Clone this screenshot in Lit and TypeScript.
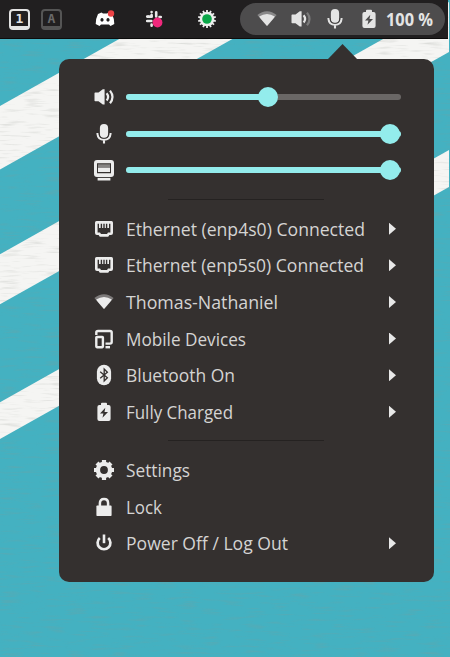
import { LitElement, html, css, svg, nothing } from "lit";
import { customElement, property } from "lit/decorators.js";

const wifi = svg`<path d="M10 2.200Q4.800 2.200 .4 6L10 17 19.600 6Q15.200 2.200 10 2.200Z" opacity=".4"/><path d="M10 4.900Q6 4.900 2.200 7.600Q2.600 8.800 10 17 17.400 8.800 17.800 7.600 14 4.900 10 4.900Z"/>`;
const speaker = (dim: number) => svg`<path d="M.5 6.200Q.5 5.500 1.200 5.500H4.500L8.800 2.200H10.600V17.400H8.800L4.500 14.200H1.200Q.5 14.200 .5 13.500Z"/><path d="M12.600 6.300Q15.600 10 12.600 13.500" fill="none" stroke="currentColor" stroke-width="2.200"/><path d="M16 3.600Q21 10 16 16.200" fill="none" stroke="currentColor" stroke-width="2.200" opacity=${dim}/>`;
const battery = svg`<path fill-rule="evenodd" d="M8 .8h4a1 1 0 0 1 1 1V3h1.600A2 2 0 0 1 16.600 5V17a2 2 0 0 1-2 2H5.400a2 2 0 0 1-2-2V5a2 2 0 0 1 2-2H7V1.800a1 1 0 0 1 1-1ZM11.300 5.800 6 11.600H9.400L8.500 15.800 14 9.900H10.500Z"/>`;
const ethernet = svg`<path fill-rule="evenodd" d="M2.800 2H17.200A1.700 1.700 0 0 1 19 3.800V14A2 2 0 0 1 17 16H15.400L14.200 17.800H5.800L4.600 16H3A2 2 0 0 1 1 14V3.800A1.700 1.700 0 0 1 2.800 2ZM3.600 4.700V13.400H6L7 15H13L14 13.400H16.400V4.700H15V9H13.300V4.700H11.900V9H10.700V4.700H9.300V9H8.100V4.700H6.700V9H5V4.700Z"/>`;

const icons: Record<string, unknown> = {
  wifi,
  battery,
  ethernet,
  speaker: speaker(1),
  speakerDim: speaker(0.3),
  mic: svg`<rect x="5.900" y="0" width="8.200" height="14" rx="4.100"/><path d="M3.500 9V10Q4 15.800 10 15.800T16.500 10V9M10 15.500V19.600" fill="none" stroke="currentColor" stroke-width="2.100"/><path d="M5.200 9V10Q5.600 14.300 10 14.300T14.800 10V9" fill="none" stroke="#34302f" stroke-width=".7"/>`,
  display: svg`<path fill-rule="evenodd" d="M3 0H17A3 3 0 0 1 20 3V14A3 3 0 0 1 17 17H3A3 3 0 0 1 0 14V3A3 3 0 0 1 3 0ZM3 3.300V13.200H17V3.300Z"/><rect x="4" y="4.300" width="12" height="3.500" opacity=".45"/><rect x="4" y="7.800" width="12" height="4.200"/><rect x="3.600" y="17.900" width="12.800" height="2.600"/>`,
  devices: svg`<g fill="none" stroke="currentColor" stroke-width="2.400"><path d="M2.300 6V3.600Q2.300 2 4 2H16Q17.700 2 17.700 3.600V13Q17.700 14.600 16 14.600H11.500"/><rect x="2.300" y="8" width="6.600" height="10.200" rx=".6"/></g><path d="M11.500 17H16V19.400H11.500Z"/>`,
  bluetooth: svg`<rect x="2.900" y="-.3" width="14.200" height="20.600" rx="7.100"/><path d="M6.200 6.700 13.400 12.800 10.200 16V4L13.400 7.200 6.200 13.300" fill="none" stroke="#34302f" stroke-width="1.300"/>`,
  gear: svg`<circle cx="10" cy="10" r="6.100" fill="none" stroke="currentColor" stroke-width="4.400"/><g stroke="currentColor" stroke-width="4.200"><path d="M10 0V3.600M10 16.400V20M0 10H3.600M16.400 10H20M3 3 5 5M15 15 17 17M3 17 5 15M15 5 17 3"/></g>`,
  lock: svg`<rect x="2.400" y="8.600" width="15.200" height="10.400" rx=".8"/><path d="M5.900 9.500V6.200Q5.900 2 10 2T14.100 6.200V9.500" fill="none" stroke="currentColor" stroke-width="2.500"/>`,
  power: svg`<path d="M5.800 5A6.400 6.400 0 1 0 14.200 5" fill="none" stroke="currentColor" stroke-width="2.700"/><path d="M8.700 1.500H11.300V10.200H8.700Z"/>`,
};

@customElement("sym-icon")
class SymIcon extends LitElement {
  @property() name = "";
  static styles = css`
    :host { display: block; width: 20px; height: 20px; flex: none; }
    svg { display: block; width: 100%; height: 100%; fill: currentColor; overflow: visible; }
  `;
  render() {
    return html`<svg viewBox="0 0 20 20">${icons[this.name]}</svg>`;
  }
}

@customElement("fit-text")
class FitText extends LitElement {
  @property() text = "";
  @property({ type: Number }) length = 100;
  static styles = css`
    :host { display: block; font: 18.4px "Open Sans", "Noto Sans", sans-serif; }
    svg { display: block; height: 26px; fill: currentColor; overflow: visible; }
  `;
  render() {
    return html`<svg width=${this.length}><text x="0" y="19.500" textLength=${this.length} lengthAdjust="spacingAndGlyphs">${this.text}</text></svg>`;
  }
}

const network = [
  ["ethernet", "Ethernet (enp4s0) Connected", 239],
  ["ethernet", "Ethernet (enp5s0) Connected", 238],
  ["wifi", "Thomas-Nathaniel", 152],
  ["devices", "Mobile Devices", 120],
  ["bluetooth", "Bluetooth On", 109],
  ["battery", "Fully Charged", 107],
] as const;
const session = [
  ["gear", "Settings", 64],
  ["lock", "Lock", 36],
  ["power", "Power Off / Log Out", 162],
] as const;
const sliders = [
  ["speaker", 142.5],
  ["mic", 264],
  ["display", 264],
] as const;

@customElement("app-root")
class AppRoot extends LitElement {
  static styles = css`
    :host { display: block; position: relative; width: 450px; height: 657px; overflow: hidden; background: #44b1c1; color: #ececec; }
    .wall { position: absolute; inset: 0; width: 450px; height: 657px; }
    .bar { position: relative; box-sizing: border-box; width: 448px; height: 39px; display: flex; align-items: center; padding: 0 3px 0 9px; background: #211f20; border-bottom: 1px solid #0d0c0c; }
    .key { box-sizing: border-box; width: 21px; height: 21px; border: 2.5px solid #e4e4e4; border-bottom-width: 4px; border-radius: 4px; color: #e4e4e4; font: bold 13px/15px "DejaVu Sans Mono", monospace; text-align: center; margin-right: 11px; }
    .key.dim { border-color: #555; color: #6a6a6a; margin-right: 33px; }
    .app { width: 20px; height: 20px; overflow: visible; }
    .slack { margin-left: 29px; }
    .green { margin-left: 33px; }
    .pill { box-sizing: border-box; margin-left: auto; width: 205px; height: 32px; border-radius: 16px; background: #4d4c4d; display: flex; align-items: center; padding: 0 12px 0 17px; color: #e4e4e4; }
    .pill sym-icon + sym-icon { margin-left: 14px; }
    .pct { margin-left: auto; font-weight: 700; font-size: 17px; }
    .panel { position: relative; box-sizing: border-box; margin: 20px 0 0 59px; width: 375px; height: 523px; padding: 20px 33px 0 34.5px; border-radius: 10px; background: #34302f; }
    .panel::before { content: ""; position: absolute; left: 268px; top: -15px; width: 31px; height: 16px; background: #34302f; clip-path: polygon(50% 0, 100% 100%, 0 100%); }
    .row { height: 36.6px; display: flex; align-items: center; }
    .row fit-text { margin-left: 12px; color: #d4d4d3; }
    .arrow { margin-left: auto; margin-right: 5px; width: 7px; height: 12px; background: #e8e8e8; clip-path: polygon(0 0, 100% 50%, 0 100%); }
    .track { position: relative; margin-left: 12px; width: 275px; height: 6px; border-radius: 3px; background: #6a6766; }
    .fill { height: 6px; border-radius: 3px; background: #93ecec; }
    .knob { position: absolute; top: -7px; width: 20px; height: 20px; margin-left: -10px; border-radius: 50%; background: #93ecec; }
    .sep { height: 21.7px; display: flex; align-items: center; justify-content: center; }
    .sep::before { content: ""; width: 156px; height: 1px; background: #252221; margin-right: 2px; }
  `;

  private row([icon, text, length]: readonly [string, string, number], arrow = true) {
    return html`<div class="row"><sym-icon name=${icon}></sym-icon><fit-text .text=${text} .length=${length}></fit-text>${arrow ? html`<span class="arrow"></span>` : nothing}</div>`;
  }

  render() {
    const teeth = Array.from({ length: 14 }, (_, i) => svg`<rect x="9.100" y="1" width="1.800" height="4" transform="rotate(${(i * 360) / 14} 10 10)"/>`);
    return html`
      <svg class="wall" viewBox="0 0 450 657">
        <filter id="weave" x="0" y="0" width="100%" height="100%">
          <feTurbulence type="fractalNoise" baseFrequency=".045 .42" numOctaves="2" seed="4"/>
          <feColorMatrix values="0 0 0 0 .28  0 0 0 0 .3  0 0 0 0 .27  1.600 0 0 0 -.84"/>
        </filter>
        <g fill="#f5f5f3">
          <path d="M0 106 449-146.300V-82.800L0 169.500Z"/>
          <path d="M0 254.300 449 2V52L0 304.300Z"/>
          <path d="M0 402.300 449 150V187L0 439Z"/>
        </g>
        <rect width="450" height="657" filter="url(#weave)" opacity=".4"/>
      </svg>
      <div class="bar">
        <span class="key">1</span><span class="key dim">A</span>
        <svg class="app" viewBox="0 0 20 20"><path fill="#fff" fill-rule="evenodd" d="M6.500 3.500 8 4.500H12L13.500 3.500 17 5Q19.500 10 19.300 15L15.500 17 14 15.500H6L4.500 17 .7 15Q.5 10 3 5ZM7 9a1.600 1.800 0 1 0 .01 0ZM13 9a1.600 1.800 0 1 0 .01 0Z"/><circle cx="16" cy="4.500" r="3.200" fill="#ed4245"/></svg>
        <svg class="app slack" viewBox="0 0 20 20"><g stroke="#e8e8e8" stroke-width="2.600" stroke-linecap="round"><path d="M7.600 6V7.600M12.200 3.300V7.400M3.200 7.600H4M15.500 8H16.800M3.200 12H7.400M7.600 15.500V16.800M12.200 12H16M7.600 3V3.100"/><path d="M4.500 7.600H7.500"/></g><circle cx="13.500" cy="13.500" r="4.900" fill="#f0287c"/></svg>
        <svg class="app green" viewBox="0 0 20 20"><g fill="#eee">${teeth}<circle cx="10" cy="10" r="7.300"/></g><circle cx="10" cy="10" r="4.800" fill="#0aa648"/></svg>
        <div class="pill">
          <sym-icon name="wifi"></sym-icon><sym-icon name="speakerDim"></sym-icon><sym-icon name="mic"></sym-icon><sym-icon name="battery"></sym-icon>
          <fit-text class="pct" text="100 %" .length=${47}></fit-text>
        </div>
      </div>
      <div class="panel">
        ${sliders.map(([icon, at]) => html`<div class="row"><sym-icon name=${icon}></sym-icon><div class="track"><div class="fill" style="width:${at > 260 ? 275 : at}px"></div><span class="knob" style="left:${at}px"></span></div></div>`)}
        <div class="sep"></div>
        ${network.map((r) => this.row(r))}
        <div class="sep"></div>
        ${session.map((r) => this.row(r, r[0] === "power"))}
      </div>
    `;
  }
}
